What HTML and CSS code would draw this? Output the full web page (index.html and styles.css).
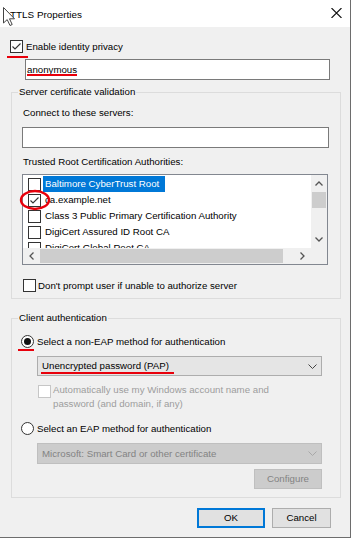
FILE: index.html
```html
<!DOCTYPE html>
<html lang="en">
<head>
    <meta charset="UTF-8">
    <title>TTLS Properties</title>
    <link rel="stylesheet" href="styles.css">
</head>
<body>
<div class="window">
    <div class="titlebar">
        <span class="title">TTLS Properties</span>
        <svg class="close" width="11" height="10" viewBox="0 0 11 10">
            <path d="M0.5 0L10.5 10M10.5 0L0.5 10" stroke="#111" stroke-width="1.1" fill="none"/>
        </svg>
    </div>

    <div class="content">
        <div class="check-row privacy">
            <span class="box">
                <svg width="11" height="11" viewBox="0 0 11 11"><path d="M1.5 5.5L4 8L9.5 2.5" stroke="#333" stroke-width="1.1" fill="none"/></svg>
            </span>
            <span>Enable identity privacy</span>
        </div>
        <div class="textbox identity">anonymous</div>

        <div class="group server">
            <div class="group-title">Server certificate validation</div>
            <div class="label">Connect to these servers:</div>
            <div class="textbox servers"></div>
            <div class="label trusted">Trusted Root Certification Authorities:</div>

            <div class="listbox">
                <div class="list-rows">
                    <div class="list-row"><span class="box"></span><span class="item selected">Baltimore CyberTrust Root</span></div>
                    <div class="list-row"><span class="box">
                        <svg width="11" height="11" viewBox="0 0 11 11"><path d="M1.5 5.5L4 8L9.5 2.5" stroke="#333" stroke-width="1.1" fill="none"/></svg>
                    </span><span class="item">ca.example.net</span></div>
                    <div class="list-row"><span class="box"></span><span class="item">Class 3 Public Primary Certification Authority</span></div>
                    <div class="list-row"><span class="box"></span><span class="item">DigiCert Assured ID Root CA</span></div>
                    <div class="list-row"><span class="box"></span><span class="item">DigiCert Global Root CA</span></div>
                </div>
                <div class="vscroll">
                    <div class="sbtn">
                        <svg width="8" height="5" viewBox="0 0 8 5"><path d="M0.5 4.5L4 1L7.5 4.5" stroke="#555" stroke-width="1.3" fill="none"/></svg>
                    </div>
                    <div class="vtrack"><div class="vthumb"></div></div>
                    <div class="sbtn">
                        <svg width="8" height="5" viewBox="0 0 8 5"><path d="M0.5 0.5L4 4L7.5 0.5" stroke="#555" stroke-width="1.3" fill="none"/></svg>
                    </div>
                </div>
                <div class="hscroll">
                    <div class="sbtn">
                        <svg width="5" height="8" viewBox="0 0 5 8"><path d="M4.5 0.5L1 4L4.5 7.5" stroke="#555" stroke-width="1.3" fill="none"/></svg>
                    </div>
                    <div class="htrack"><div class="hthumb"></div></div>
                    <div class="sbtn">
                        <svg width="5" height="8" viewBox="0 0 5 8"><path d="M0.5 0.5L4 4L0.5 7.5" stroke="#555" stroke-width="1.3" fill="none"/></svg>
                    </div>
                </div>
                <div class="corner"></div>
            </div>

            <div class="check-row dont-prompt">
                <span class="box"></span>
                <span>Don't prompt user if unable to authorize server</span>
            </div>
        </div>

        <div class="group client">
            <div class="group-title">Client authentication</div>

            <div class="radio-row first">
                <span class="radio on"></span>
                <span>Select a non-EAP method for authentication</span>
            </div>
            <div class="select method">
                <span>Unencrypted password (PAP)</span>
                <svg width="9" height="5" viewBox="0 0 9 5"><path d="M0.5 0.5L4.5 4.5L8.5 0.5" stroke="#444" stroke-width="1" fill="none"/></svg>
            </div>
            <div class="check-row auto-login disabled">
                <span class="box"></span>
                <span>Automatically use my Windows account name and<br>password (and domain, if any)</span>
            </div>

            <div class="radio-row second">
                <span class="radio"></span>
                <span>Select an EAP method for authentication</span>
            </div>
            <div class="select eap disabled">
                <span>Microsoft: Smart Card or other certificate</span>
                <svg width="9" height="5" viewBox="0 0 9 5"><path d="M0.5 0.5L4.5 4.5L8.5 0.5" stroke="#a8a8a8" stroke-width="1" fill="none"/></svg>
            </div>
            <div class="button configure disabled">Configure</div>
        </div>

        <div class="buttons">
            <div class="button ok">OK</div>
            <div class="button cancel">Cancel</div>
        </div>
    </div>

    <!-- red marks and the mouse pointer sit on top of the dialog -->
    <svg class="overlay" width="351" height="540" viewBox="0 0 351 540">
        <g fill="#e8000b">
            <rect x="7" y="56" width="21" height="2"/>
            <rect x="27" y="74" width="50" height="2"/>
            <rect x="18" y="349" width="16" height="2"/>
            <rect x="41" y="372" width="133" height="2"/>
        </g>
        <ellipse cx="35" cy="200" rx="14" ry="9" fill="none" stroke="#e8000b" stroke-width="2.4"/>
        <path d="M3.5 7.5L3.5 23L7.2 19.6L10 25.5L12.2 24.5L9.5 18.8L14.5 18.8Z" fill="#fff" stroke="#444" stroke-width="1"/>
    </svg>
</div>
</body>
</html>
```

FILE: styles.css
```css
body {
    margin: 0;
    background: #fff;
    font-family: "Liberation Sans", Arial, sans-serif;
    font-size: 9.7px;
    color: #000;
}
.window {
    position: relative;
    width: 351px;
    height: 538px;
    box-sizing: border-box;
    border-right: 1px solid #6d6d6d;
    border-bottom: 1px solid #6d6d6d;
    background: #f0f0f0;
    overflow: hidden;
}
.titlebar {
    height: 27px;
    background: #fff;
    display: flex;
    align-items: center;
    justify-content: space-between;
    padding: 0 8px 0 10px;
}
.title {
    font-size: 9.9px;
    margin-top: 1px;
}
.close {
    margin-bottom: 1px;
}
.content {
    display: flex;
    flex-direction: column;
    align-items: flex-start;
    line-height: 14px;
}
.box {
    width: 13px;
    height: 13px;
    box-sizing: border-box;
    border: 1px solid #333;
    background: #fff;
    flex: none;
    display: flex;
    align-items: center;
    justify-content: center;
}
.check-row {
    display: flex;
    align-items: center;
    gap: 3px;
    height: 13px;
}
.privacy {
    margin: 13px 0 0 10px;
}
.textbox {
    box-sizing: border-box;
    height: 21px;
    border: 1px solid #7a7a7a;
    background: #fff;
    line-height: 19px;
    padding-left: 1px;
}
.identity {
    margin: 6px 0 0 25px;
    width: 305px;
}
.group {
    box-sizing: border-box;
    width: 330px;
    margin-left: 11px;
    border: 1px solid #dcdcdc;
    display: flex;
    flex-direction: column;
    align-items: flex-start;
}
.group-title {
    margin: -8px 0 0 6px;
    padding: 0 1px;
    background: #f0f0f0;
    line-height: 14px;
}
.server {
    margin-top: 12px;
    padding-bottom: 6px;
}
.label {
    margin: 7px 0 0 11px;
}
.servers {
    margin: 7px 0 0 10px;
    width: 307px;
}
.listbox {
    margin: 5px 0 0 10px;
    width: 306px;
    height: 91px;
    box-sizing: border-box;
    border: 1px solid #828790;
    background: #fff;
    display: grid;
    grid-template-columns: 288px 16px;
    grid-template-rows: 73px 16px;
}
.list-rows {
    overflow: hidden;
    padding-top: 1px;
}
.list-row {
    height: 16px;
    display: flex;
    align-items: center;
    padding-left: 5px;
    white-space: nowrap;
}
.item {
    margin-left: 2px;
    padding: 0 2px;
    line-height: 16px;
}
.item.selected {
    background: #0078d7;
    color: #fff;
    padding-right: 6px;
}
.vscroll {
    background: #f0f0f0;
    display: flex;
    flex-direction: column;
}
.sbtn {
    flex: none;
    display: flex;
    align-items: center;
    justify-content: center;
}
.vscroll .sbtn {
    height: 17px;
}
.vtrack {
    flex: 1;
}
.vthumb {
    height: 16px;
    margin: 0 1px;
    background: #cdcdcd;
}
.hscroll {
    background: #f0f0f0;
    display: flex;
}
.hscroll .sbtn {
    width: 17px;
}
.htrack {
    flex: 1;
    display: flex;
}
.hthumb {
    width: 243px;
    margin: 1px 0;
    background: #cdcdcd;
}
.corner {
    background: #f0f0f0;
}
.dont-prompt {
    margin: 14px 0 0 11px;
    gap: 2px;
}
.client {
    margin-top: 19px;
    padding-bottom: 8px;
}
.radio-row {
    display: flex;
    align-items: center;
    gap: 3px;
    height: 13px;
    margin-left: 9px;
}
.radio {
    width: 13px;
    height: 13px;
    box-sizing: border-box;
    border: 1px solid #333;
    border-radius: 50%;
    background: #fff;
    display: flex;
    align-items: center;
    justify-content: center;
}
.radio.on::after {
    content: "";
    width: 7px;
    height: 7px;
    border-radius: 50%;
    background: #111;
}
.radio-row.first {
    margin-top: 10px;
}
.radio-row.second {
    margin-top: 11px;
}
.select {
    box-sizing: border-box;
    width: 285px;
    margin: 8px 0 0 25px;
    border: 1px solid #adadad;
    background: #e5e5e5;
    display: flex;
    align-items: center;
    justify-content: space-between;
    padding: 0 4px 0 4px;
}
.method {
    height: 20px;
}
.eap {
    height: 21px;
}
.select.disabled {
    background: #cccccc;
    border-color: #bfbfbf;
    color: #838383;
}
.auto-login {
    margin: 7px 0 0 26px;
    height: auto;
    align-items: flex-start;
    gap: 2px;
}
.auto-login .box {
    margin-top: 2px;
}
.check-row.disabled {
    color: #9d9d9d;
}
.check-row.disabled .box {
    border-color: #c6c6c6;
}
.button {
    box-sizing: border-box;
    height: 20px;
    border: 1px solid #adadad;
    background: #e1e1e1;
    display: flex;
    align-items: center;
    justify-content: center;
}
.configure {
    width: 68px;
    margin: 5px 0 0 242px;
}
.button.disabled {
    background: #cccccc;
    border-color: #bfbfbf;
    color: #838383;
}
.buttons {
    align-self: stretch;
    display: flex;
    justify-content: flex-end;
    gap: 7px;
    margin-top: 10px;
    padding-right: 19px;
}
.ok {
    width: 68px;
    border-color: #0078d7;
    box-shadow: inset 0 0 0 1px #0078d7;
}
.cancel {
    width: 59px;
}
.overlay {
    position: absolute;
    top: 0;
    left: 0;
    pointer-events: none;
}
```
